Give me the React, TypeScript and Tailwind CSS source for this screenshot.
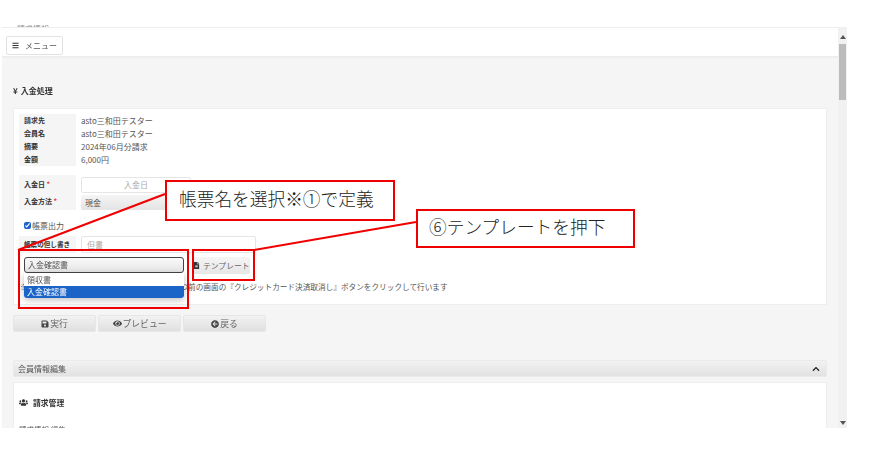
import { FaBars, FaSave, FaEye, FaArrowCircleLeft, FaChevronUp, FaUsers, FaFileAlt } from "react-icons/fa"

const fontSans = "font-['Noto_Sans_CJK_JP','Liberation_Sans',sans-serif]"

const summary = [
  ["請求先", "asto三和田テスター"],
  ["会員名", "asto三和田テスター"],
  ["摘要", "2024年06月分請求"],
  ["金額", "6,000円"],
]

const actions = [
  { label: "実行", icon: <FaSave size={8} /> },
  { label: "プレビュー", icon: <FaEye size={9} /> },
  { label: "戻る", icon: <FaArrowCircleLeft size={8} /> },
]

function Scrollbar() {
  return (
    <div className="w-[9px] shrink-0 bg-[#f1f1f1] flex flex-col items-center">
      <div className="h-[17px] flex items-center justify-center pt-[3px]">
        <div className="border-x-[3px] border-b-[4px] border-x-transparent border-b-[#555]" />
      </div>
      <div className="w-[7px] h-[56px] bg-[#bcbcbc]" />
      <div className="flex-1" />
      <div className="h-[10px] flex items-center justify-center">
        <div className="border-x-[3px] border-t-[4px] border-x-transparent border-t-[#555]" />
      </div>
    </div>
  )
}

function Callouts() {
  return (
    <>
      <svg className="absolute left-0 top-0" width="881" height="451">
        <line x1="165" y1="194" x2="18" y2="250" stroke="#f00000" strokeWidth="2" />
        <line x1="416" y1="222" x2="254" y2="250" stroke="#f00000" strokeWidth="2" />
      </svg>
      <div className="absolute left-[165px] top-[180px] w-[230px] h-[41px] border-2 border-[#ee0000] bg-white flex items-center pl-[12px] text-[17.7px] text-[#222] font-['Liberation_Serif','Noto_Sans_CJK_JP',serif] font-light whitespace-nowrap">
        帳票名を選択※①で定義
      </div>
      <div className="absolute left-[416px] top-[209px] w-[219px] h-[39px] border-2 border-[#ee0000] bg-white flex items-center pl-[11px] text-[17.7px] text-[#222] font-['Liberation_Serif','Noto_Sans_CJK_JP',serif] font-light whitespace-nowrap">
        ⑥テンプレートを押下
      </div>
      <div className="absolute left-[18px] top-[249px] w-[171px] h-[60px] border-2 border-[#ee0000]" />
      <div className="absolute left-[192px] top-[249px] w-[63px] h-[32px] border-2 border-[#ee0000]" />
    </>
  )
}

export default function App() {
  return (
    <div className={`relative w-[881px] h-[451px] bg-white overflow-hidden pt-[25px] pl-[2px] ${fontSans}`}>
      <div className="blur-[0.35px]">
        {/* 上に流れて切れたパンくず */}
        <div className="h-[2px] overflow-hidden pl-[15px] text-[8px] leading-[8px] text-[#888] whitespace-nowrap">請求情報</div>
        <div className="w-[845px] h-[401px] flex overflow-hidden">
          <div className="flex-1 min-w-0 flex flex-col">
            {/* ヘッダー */}
            <div className="h-[31px] shrink-0 bg-white border-t border-[#eee] border-b-2 border-b-[#eeeeee] pl-[4px] pt-[8px]">
              <button className="h-[19px] w-[57px] bg-white border border-[#e2e2e2] rounded-[2px] flex items-center justify-center gap-[6px] text-[8px] text-[#555]">
                <FaBars size={7} className="text-[#333]" />
                メニュー
              </button>
            </div>

            {/* 本体 */}
            <div className="flex-1 min-h-0 bg-[#f5f5f5] px-[11px] overflow-hidden">
              <div className="h-[50px] flex items-end pb-[11px] text-[8px] leading-[12px] font-bold text-[#333]">
                <span className="mr-[3px]">¥</span>入金処理
              </div>

              <div className="relative h-[197px] bg-white border border-[#eee] pl-[5px] pt-[5px] text-[8px] text-[#555]">
                {/* 概要 */}
                <div className="flex flex-col">
                  {summary.map(([k, v]) => (
                    <div key={k} className="flex h-[13px] items-center">
                      <div className="w-[57px] h-full bg-[#f5f5f5] pl-[5px] text-[7px] font-bold text-[#333] flex items-center">{k}</div>
                      <div className="pl-[5px]">{v}</div>
                    </div>
                  ))}
                </div>

                {/* 入金 */}
                <div className="flex mt-[9px]">
                  <div className="w-[57px] h-[35px] bg-[#f5f5f5] pl-[5px] text-[7px] font-bold text-[#333] flex flex-col justify-around">
                    <span>入金日 <span className="text-[#e33]">*</span></span>
                    <span>入金方法 <span className="text-[#e33]">*</span></span>
                  </div>
                  <div className="pl-[5px] pt-[2px] flex flex-col gap-[2px]">
                    <div className="w-[110px] h-[16px] border border-[#e5e5e5] rounded-[2px] flex items-center justify-center text-[#aaa]">入金日</div>
                    <div className="w-[110px] h-[15px] bg-gradient-to-b from-[#f5f5f5] to-[#e4e4e4] rounded-[2px] pl-[4px] flex items-center">現金</div>
                  </div>
                </div>

                {/* 帳票出力 */}
                <div className="flex items-center h-[13px] mt-[9px] pl-[5px]">
                  <input type="checkbox" readOnly checked className="w-[7px] h-[7px] accent-[#1a64c8] mr-[1px]" />
                  <span>帳票出力</span>
                </div>

                <div className="flex mt-[4px]">
                  <div className="w-[57px] h-[17px] bg-[#f5f5f5] pl-[5px] text-[6.6px] font-bold text-[#333] flex items-center whitespace-nowrap">帳票の但し書き</div>
                  <div className="ml-[5px] w-[175px] h-[17px] border border-[#e5e5e5] rounded-[2px] flex items-center pl-[5px] text-[#aaa]">但書</div>
                </div>

                {/* 帳票選択 */}
                <div className="flex gap-[8px] mt-[4px] pl-[5px]">
                  <div className="relative w-[160px] h-[17px]">
                    <div className="w-full h-[16px] border border-[#444] rounded-[3px] bg-gradient-to-b from-[#fafafa] to-[#e4e4e4] flex items-center pl-[3px]">入金確認書</div>
                    <div className="absolute left-0 top-[16px] z-10 w-full h-[25px] bg-white rounded-b-[3px] shadow-[0_2px_6px_rgba(0,0,0,0.25)] overflow-hidden">
                      <div className="h-[13px] pl-[3px] flex items-center">領収書</div>
                      <div className="h-[12px] pl-[3px] flex items-center bg-[#1a64c8] text-white">入金確認書</div>
                    </div>
                  </div>
                  <button className="w-[58px] h-[17px] bg-gradient-to-b from-[#f5f5f5] to-[#e6e6e6] rounded-[2px] flex items-center pl-[1px] gap-[3px] text-[7.8px] text-[#666] whitespace-nowrap">
                    <FaFileAlt size={7} className="text-[#333]" />
                    テンプレート
                  </button>
                </div>

                <p className="mt-[7px] pl-[1px] text-[7.65px] leading-[12px] whitespace-nowrap">
                  ※クレジットカード決済を取り消す場合は、一つ前の画面の『クレジットカード決済取消し』ボタンをクリックして行います
                </p>
              </div>

              {/* ボタン */}
              <div className="flex gap-[2px] mt-[10px]">
                {actions.map((a) => (
                  <button key={a.label} className="w-[83px] h-[17px] bg-gradient-to-b from-[#f2f2f2] to-[#e0e0e0] border border-[#e6e6e6] rounded-[2px] flex items-center justify-center gap-[1px] text-[8.8px] text-[#666]">
                    <span className="text-[#444]">{a.icon}</span>
                    {a.label}
                  </button>
                ))}
              </div>

              {/* 会員情報編集 */}
              <div className="mt-[28px] h-[17px] bg-gradient-to-b from-[#f2f2f2] to-[#e2e2e2] border border-[#eaeaea] rounded-[2px] flex items-center justify-between pl-[4px] pr-[6px] text-[8px] text-[#555]">
                会員情報編集
                <FaChevronUp size={8} className="text-[#222]" />
              </div>
              <div className="mt-[5px] h-[60px] bg-white pl-[5px] pt-[13px] border border-[#eee]">
                <div className="flex items-center h-[13px] gap-[5px] text-[7.8px] font-bold text-[#333]">
                  <FaUsers size={9} />
                  請求管理
                </div>
                <div className="mt-[17px] text-[7.5px] leading-[8px] text-[#555]">請求情報 編集</div>
              </div>
            </div>
          </div>
          <Scrollbar />
        </div>
      </div>
      <Callouts />
    </div>
  )
}
